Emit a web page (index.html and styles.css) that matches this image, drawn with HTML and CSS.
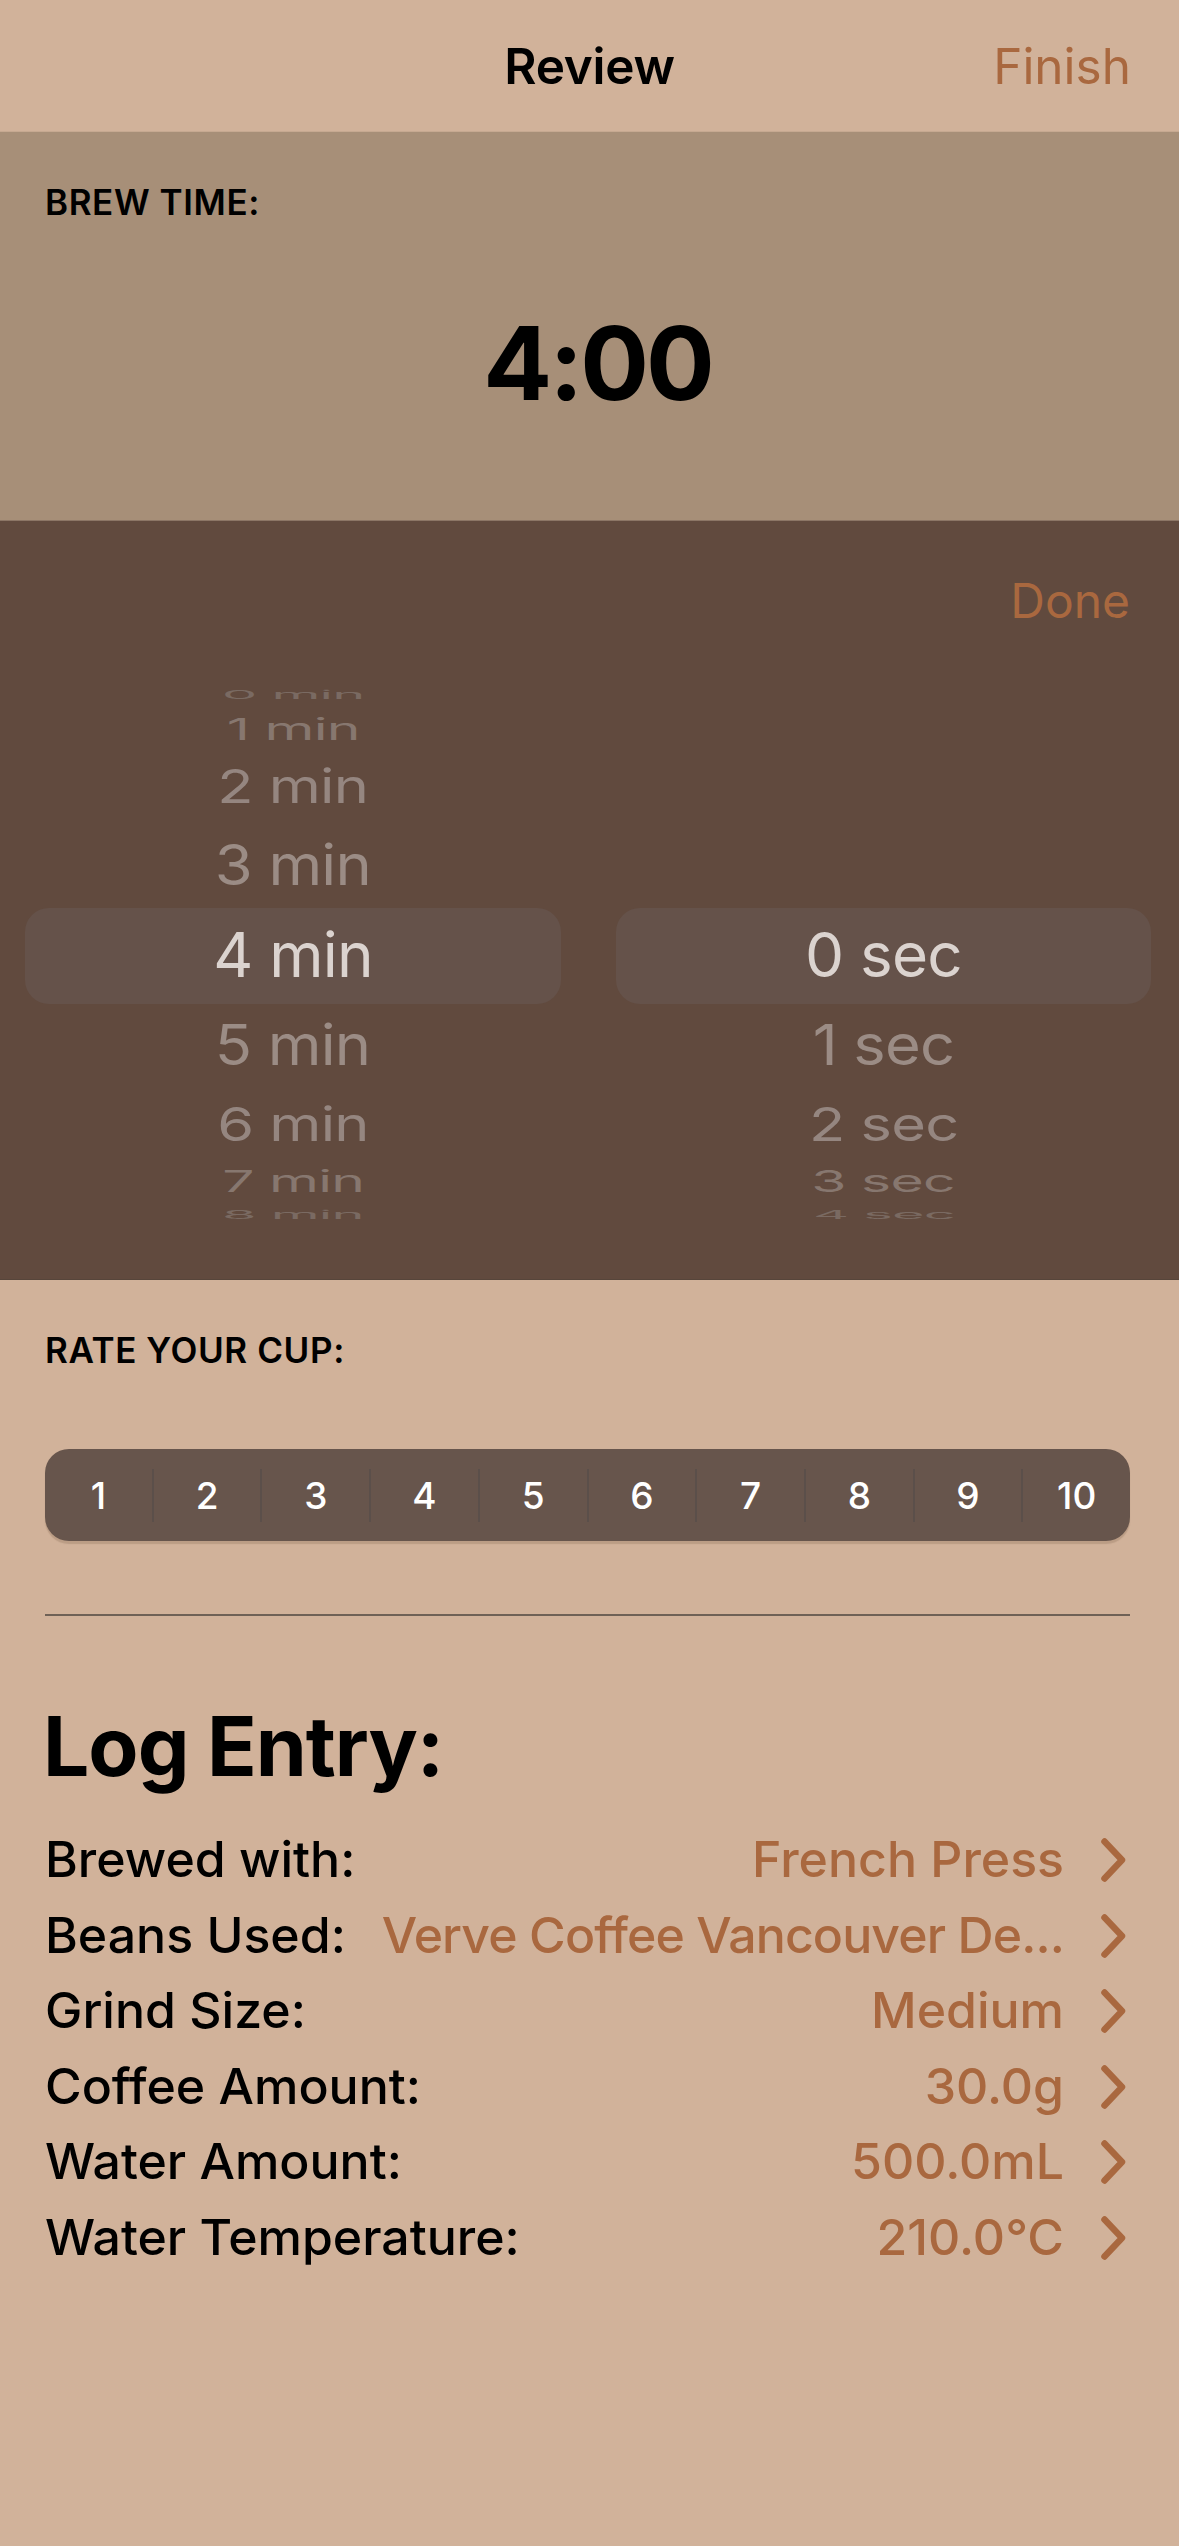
FILE: index.html
```html
<!DOCTYPE html>
<html lang="en">
<head>
<meta charset="utf-8">
<title>Review</title>
<link rel="stylesheet" href="styles.css">
</head>
<body>
<header class="nav">
  <span></span>
  <span class="nav-title">Review</span>
  <span class="nav-action">Finish</span>
</header>

<section class="brew">
  <div class="label">BREW TIME:</div>
  <div class="time">4:00</div>
</section>

<section class="picker">
  <div class="done-row">Done</div>
  <div class="wheels">
    <div class="wheel wheel-min">
      <div class="wheel-sel"></div>
      <div class="wheel-items">
        <div class="wi d4"><span>0 min</span></div>
        <div class="wi d3"><span>1 min</span></div>
        <div class="wi d2"><span>2 min</span></div>
        <div class="wi d1"><span>3 min</span></div>
        <div class="wi d0"><span>4 min</span></div>
        <div class="wi d1"><span>5 min</span></div>
        <div class="wi d2"><span>6 min</span></div>
        <div class="wi d3"><span>7 min</span></div>
        <div class="wi d4"><span>8 min</span></div>
      </div>
    </div>
    <div class="wheel wheel-sec">
      <div class="wheel-sel"></div>
      <div class="wheel-items">
        <div class="wi d4"></div>
        <div class="wi d3"></div>
        <div class="wi d2"></div>
        <div class="wi d1"></div>
        <div class="wi d0"><span>0 sec</span></div>
        <div class="wi d1"><span>1 sec</span></div>
        <div class="wi d2"><span>2 sec</span></div>
        <div class="wi d3"><span>3 sec</span></div>
        <div class="wi d4"><span>4 sec</span></div>
      </div>
    </div>
  </div>
</section>

<section class="rate">
  <div class="label">RATE YOUR CUP:</div>
  <div class="segmented">
    <span class="seg">1</span><span class="sep"></span>
    <span class="seg">2</span><span class="sep"></span>
    <span class="seg">3</span><span class="sep"></span>
    <span class="seg">4</span><span class="sep"></span>
    <span class="seg">5</span><span class="sep"></span>
    <span class="seg">6</span><span class="sep"></span>
    <span class="seg">7</span><span class="sep"></span>
    <span class="seg">8</span><span class="sep"></span>
    <span class="seg">9</span><span class="sep"></span>
    <span class="seg">10</span>
  </div>
  <div class="divider"></div>
</section>

<section class="log">
  <h1 class="log-title">Log Entry:</h1>
  <div class="rows">
    <div class="row">
      <span class="row-label">Brewed with:</span>
      <span class="row-value">French Press</span>
      <svg class="chev" viewBox="0 0 25 44" width="25" height="44"><path d="M3.5 3.5 L21 22 L3.5 40.5"/></svg>
    </div>
    <div class="row">
      <span class="row-label">Beans Used:</span>
      <span class="row-value row-value-long">Verve Coffee Vancouver De...</span>
      <svg class="chev" viewBox="0 0 25 44" width="25" height="44"><path d="M3.5 3.5 L21 22 L3.5 40.5"/></svg>
    </div>
    <div class="row">
      <span class="row-label">Grind Size:</span>
      <span class="row-value">Medium</span>
      <svg class="chev" viewBox="0 0 25 44" width="25" height="44"><path d="M3.5 3.5 L21 22 L3.5 40.5"/></svg>
    </div>
    <div class="row">
      <span class="row-label">Coffee Amount:</span>
      <span class="row-value">30.0g</span>
      <svg class="chev" viewBox="0 0 25 44" width="25" height="44"><path d="M3.5 3.5 L21 22 L3.5 40.5"/></svg>
    </div>
    <div class="row">
      <span class="row-label">Water Amount:</span>
      <span class="row-value">500.0mL</span>
      <svg class="chev" viewBox="0 0 25 44" width="25" height="44"><path d="M3.5 3.5 L21 22 L3.5 40.5"/></svg>
    </div>
    <div class="row">
      <span class="row-label">Water Temperature:</span>
      <span class="row-value">210.0°C</span>
      <svg class="chev" viewBox="0 0 25 44" width="25" height="44"><path d="M3.5 3.5 L21 22 L3.5 40.5"/></svg>
    </div>
  </div>
</section>
</body>
</html>
```

FILE: styles.css
```css
* { box-sizing: border-box; }

html, body {
  margin: 0;
  padding: 0;
}

body {
  width: 1179px;
  min-height: 2546px;
  background: #d1b29a;
  font-family: Inter, "Noto Sans", "Liberation Sans", sans-serif;
  color: #000;
}

/* Navigation bar */
.nav {
  height: 132px;
  padding-top: 2px;
  border-bottom: 1px solid #c6a991;
  display: grid;
  grid-template-columns: 1fr auto 1fr;
  align-items: start;
  line-height: 129px;
  font-size: 49.5px;
}

.nav-title {
  font-weight: 600;
  letter-spacing: -0.3px;
}

.nav-action {
  justify-self: end;
  padding-right: 48px;
  color: #a9683f;
  font-weight: 400;
}

/* Section labels */
.label {
  font-size: 35px;
  font-weight: 600;
  line-height: 42px;
  letter-spacing: 0.6px;
}

/* Brew time */
.brew {
  height: 389px;
  background: #a78f78;
  border-bottom: 1px solid #8c7666;
  padding: 49px 0 0 45px;
}

.time {
  margin-top: 80px;
  margin-left: -45px;
  padding-left: 16px;
  text-align: center;
  font-size: 102px;
  font-weight: 700;
  line-height: 120px;
  letter-spacing: -3px;
}

/* Picker */
.picker {
  background: #614a3e;
  border-bottom: 1px solid #57453a;
  padding: 49.5px 0 53px;
}

.done-row {
  text-align: right;
  padding-right: 49px;
  font-size: 48px;
  line-height: 60px;
  color: #a9683f;
}

.wheels {
  display: flex;
  gap: 55px;
  padding-left: 25px;
  margin-top: 53.5px;
}

.wheel {
  position: relative;
  height: 542px;
}

.wheel-min { width: 536px; }
.wheel-sec { width: 535px; }

.wheel-sel {
  position: absolute;
  left: 0;
  right: 0;
  top: 223.5px;
  height: 96px;
  border-radius: 24px;
  background: #65524a;
}

.wheel-items {
  position: relative;
  display: flex;
  flex-direction: column;
}

.wi {
  display: flex;
  align-items: center;
  justify-content: center;
  font-size: 62px;
  line-height: 1;
  letter-spacing: -0.8px;
}

.wi span {
  display: block;
  white-space: nowrap;
}

.d0 { height: 90px; }
.d0 span { color: #dbd3cf; }

.d1 { height: 90px; }
.d1 span { color: #9b8c85; transform: scale(0.99, 0.9); }

.d2 { height: 68px; }
.d2 span { color: #958680; transform: scale(0.96, 0.76); }

.d3 { height: 46px; }
.d3 span { color: #87776f; transform: scale(0.92, 0.48); }

.d4 { height: 22px; }
.d4 span { color: #7a6a62; transform: scale(0.9, 0.18); }

/* Rate */
.rate {
  padding: 49px 49px 0 45px;
}

.segmented {
  margin-top: 78px;
  width: 1085px;
  height: 92px;
  display: flex;
  align-items: center;
  background: #67554c;
  border-radius: 24px;
  box-shadow: 0 3px 1px rgba(110, 80, 60, 0.22);
}

.seg {
  flex: 1;
  text-align: center;
  color: #ffffff;
  font-size: 37px;
  font-weight: 500;
}

.sep {
  flex: none;
  width: 2px;
  height: 53px;
  background: #5b4f4a;
}

.divider {
  margin-top: 73px;
  width: 1085px;
  height: 2px;
  background: #6f6156;
}

/* Log entry */
.log {
  padding: 0 53px 0 45px;
}

.log-title {
  margin: 80.7px 0 0 -2px;
  font-size: 82px;
  font-weight: 700;
  line-height: 100px;
  letter-spacing: -1px;
}

.rows {
  margin-top: 25.6px;
}

.row {
  display: flex;
  align-items: center;
  height: 75.5px;
  font-size: 50px;
  font-weight: 500;
  line-height: 75.5px;
  letter-spacing: 0;
}

.row-label {
  flex: none;
}

.row-value {
  flex: 1;
  min-width: 0;
  margin-left: 28px;
  text-align: right;
  color: #a9683f;
  white-space: nowrap;
  overflow: hidden;
  text-overflow: ellipsis;
}

.row-value-long {
  margin-left: 24px;
  letter-spacing: -0.9px;
}

.chev {
  flex: none;
  margin-left: 37px;
}

.chev path {
  fill: none;
  stroke: #a9683f;
  stroke-width: 6.5;
  stroke-linecap: round;
  stroke-linejoin: round;
}
```
